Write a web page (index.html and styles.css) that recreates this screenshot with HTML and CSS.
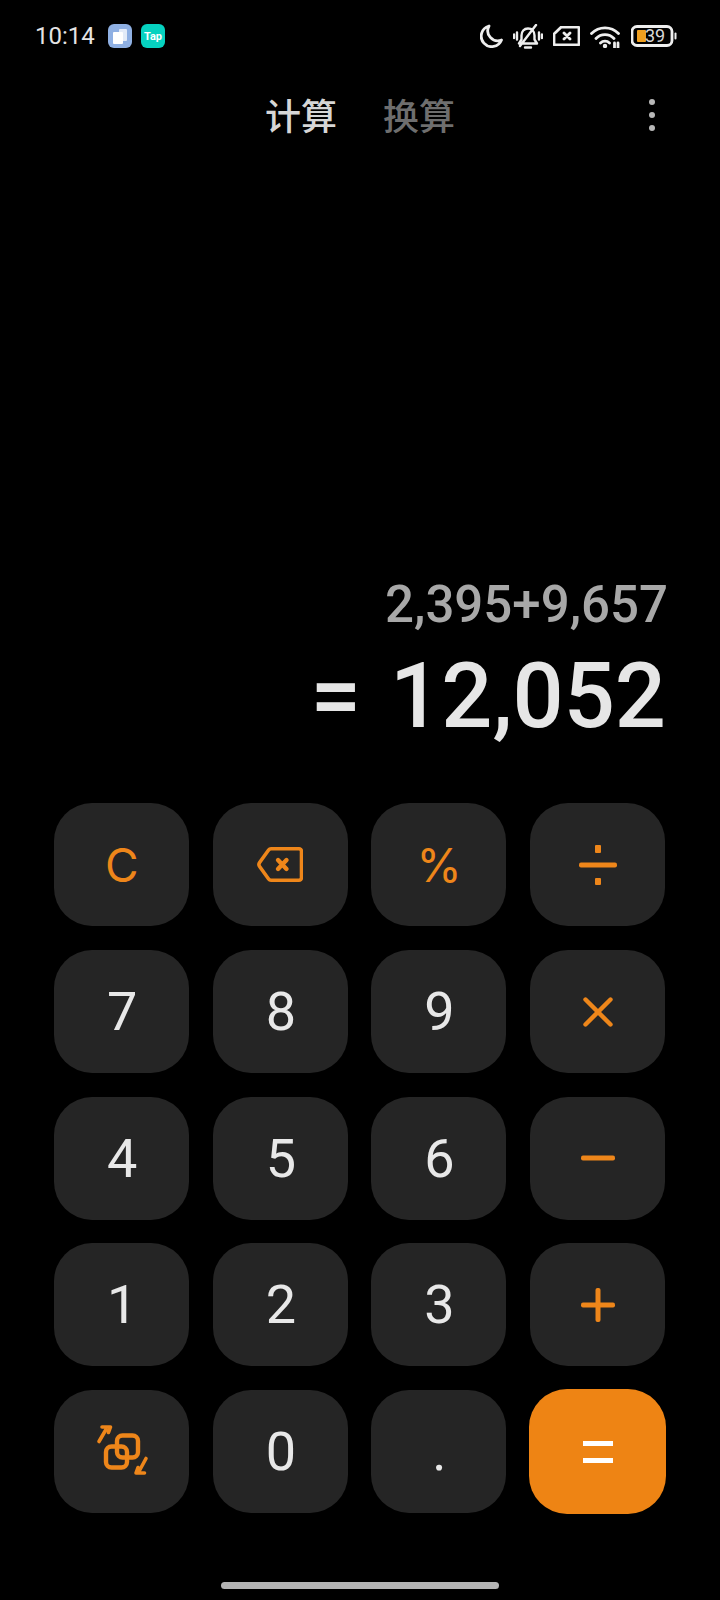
FILE: index.html
```html
<!DOCTYPE html>
<html lang="zh">
<head>
    <meta charset="utf-8">
    <title>计算器</title>
    <link rel="stylesheet" href="styles.css">
</head>
<body>
    <div class="page">
        <div class="status">
            <span class="time">10:14</span>
            <span class="app app-blue">
                <svg width="24" height="24" viewBox="0 0 24 24"><rect x="11" y="5" width="8" height="12" rx="1" fill="#fff" opacity="0.75"/><rect x="5" y="8" width="10" height="12" rx="1" fill="#fff"/></svg>
            </span>
            <span class="app app-tap">Tap</span>
            <div class="status-icons">
                <svg width="23" height="24" viewBox="0 0 23 24"><path d="M9 2 A10.5 10.5 0 1 0 21.5 16 A10 10 0 0 1 9 2 Z" class="line"/></svg>
                <svg width="30" height="25" viewBox="0 0 30 25"><path d="M15 4.5 c-4 0 -6.5 3 -6.5 7 v4 l-2.5 4 h18 l-2.5 -4 v-4 c0 -4 -2.5 -7 -6.5 -7 Z M12 23.5 h6 M7 22 L23 1 M4 8.5 v7 M1 10.5 v3.5 M26 8.5 v7 M29 10.5 v3.5" class="line thin"/></svg>
                <svg width="27" height="20" viewBox="0 0 27 20"><path d="M8 1.2 H25 a1 1 0 0 1 1 1 V18 a1 1 0 0 1 -1 1 H2 a1 1 0 0 1 -1 -1 V8 Z M11 7 L17 13 M17 7 L11 13" class="line"/></svg>
                <svg width="31" height="23" viewBox="0 0 31 23"><path d="M1.5 8.5 A19 19 0 0 1 28.5 8.5 M6 13.5 A12.5 12.5 0 0 1 24 13.5 M10.5 18 A6.5 6.5 0 0 1 19.5 18" class="line"/><circle cx="15" cy="21" r="2.2" fill="#eee"/><path d="M24.5 23 v-5 M28 23 v-5" class="line"/></svg>
                <svg width="46" height="22" viewBox="0 0 46 22">
                    <rect x="1" y="1.5" width="40" height="19" rx="5" class="line"/>
                    <rect x="6" y="5" width="9" height="12" rx="1" fill="#f0a020"/>
                    <text x="14" y="17" class="batt-text">39</text>
                    <rect x="43.5" y="7.5" width="2" height="7" rx="1" fill="#eee"/>
                </svg>
            </div>
        </div>

        <div class="tabs">
            <span></span>
            <div class="tab-group">
                <span class="tab active">计算</span>
                <span class="tab">换算</span>
            </div>
            <div class="menu"><i></i><i></i><i></i></div>
        </div>

        <div class="display">
            <div class="expr">2,395+9,657</div>
            <div class="result"><span class="eq">=</span><span>12,052</span></div>
        </div>

        <div class="keypad">
            <div class="key op txt">C</div>
            <div class="key op">
                <svg width="46" height="35" viewBox="0 0 46 35"><path d="M14 1.8 H42 a2.5 2.5 0 0 1 2.5 2.5 V30.7 a2.5 2.5 0 0 1 -2.5 2.5 H14 a3 3 0 0 1 -2.4 -1.2 L2.6 19.5 a3.5 3.5 0 0 1 0 -4 L11.6 3 a3 3 0 0 1 2.4 -1.2 Z" class="op-line"/><path d="M21 13 L29.5 22 M29.5 13 L21 22" class="op-line heavy"/></svg>
            </div>
            <div class="key op txt">%</div>
            <div class="key op">
                <svg width="38" height="40" viewBox="0 0 38 40"><rect x="16" y="0" width="6" height="8" rx="1" class="op-fill"/><rect x="0" y="17.5" width="38" height="5" rx="2" class="op-fill"/><rect x="16" y="33" width="6" height="7" rx="1" class="op-fill"/></svg>
            </div>

            <div class="key">7</div>
            <div class="key">8</div>
            <div class="key">9</div>
            <div class="key op">
                <svg width="30" height="30" viewBox="0 0 30 30"><path d="M2.5 2.5 L27.5 27.5 M27.5 2.5 L2.5 27.5" class="op-line heavy"/></svg>
            </div>

            <div class="key">4</div>
            <div class="key">5</div>
            <div class="key">6</div>
            <div class="key op">
                <svg width="34" height="6" viewBox="0 0 34 6"><rect y="0.5" width="34" height="5" rx="2" class="op-fill"/></svg>
            </div>

            <div class="key">1</div>
            <div class="key">2</div>
            <div class="key">3</div>
            <div class="key op">
                <svg width="34" height="34" viewBox="0 0 34 34"><rect y="14.5" width="34" height="5" rx="2" class="op-fill"/><rect x="14.5" width="5" height="34" rx="2" class="op-fill"/></svg>
            </div>

            <div class="key op">
                <svg width="80" height="80" viewBox="-3 1.5 80 80">
                    <rect x="32" y="25" width="21" height="22" rx="5.5" class="op-line heavy"/>
                    <rect x="21" y="36" width="21" height="21" rx="5.5" class="op-line heavy"/>
                    <path d="M14 31 L21 19 M17 16.5 H25.5 L23.5 22 M61 48 L54.5 60 M59.5 62.5 H51 L53 57" class="op-line"/>
                </svg>
            </div>
            <div class="key">0</div>
            <div class="key">.</div>
            <div class="key equals">
                <svg width="30" height="22" viewBox="0 0 30 22"><rect width="30" height="5" y="0" fill="#fff"/><rect width="30" height="5" y="17" fill="#fff"/></svg>
            </div>
        </div>

        <div class="home-bar"></div>
    </div>
</body>
</html>
```

FILE: styles.css
```css
body {
    margin: 0;
    background-color: #000;
    font-family: Roboto, "Noto Sans CJK SC", sans-serif;
}

.page {
    height: 1600px;
    display: flex;
    flex-direction: column;
    overflow: hidden;
}

/* status bar */
.status {
    display: flex;
    align-items: center;
    height: 26px;
    margin-top: 23px;
    padding: 0 43px 0 35px;
}

.time {
    width: 60px;
    margin-right: 13px;
    color: #e4e4e4;
    font-size: 24px;
    white-space: nowrap;
}

.app {
    width: 24px;
    height: 24px;
    margin-right: 9px;
    border-radius: 6px;
    display: flex;
    align-items: center;
    justify-content: center;
}

.app-blue {
    background-color: #8fb0e3;
}

.app-tap {
    background-color: #06d2c0;
    color: #fff;
    font-size: 11px;
    font-weight: 700;
}

.status-icons {
    margin-left: auto;
    display: flex;
    align-items: center;
    gap: 10px;
}

.line {
    fill: none;
    stroke: #eee;
    stroke-width: 2.8;
    stroke-linecap: round;
    stroke-linejoin: round;
}

.thin {
    stroke-width: 2.4;
}

.batt-text {
    fill: #d8d8d8;
    font-size: 18px;
}

/* tabs */
.tabs {
    display: grid;
    grid-template-columns: 1fr auto 1fr;
    align-items: center;
    margin-top: 45px;
    height: 48px;
}

.tab-group {
    display: flex;
    gap: 46px;
}

.tab {
    color: #6e6e6e;
    font-size: 36px;
    font-weight: 500;
    line-height: 48px;
}

.tab.active {
    color: #d6d6d6;
}

.menu {
    justify-self: end;
    margin-right: 65px;
    margin-bottom: 6px;
    display: flex;
    flex-direction: column;
    gap: 7px;
}

.menu i {
    width: 6px;
    height: 6px;
    border-radius: 50%;
    background-color: #b8b8b8;
}

/* display */
.display {
    margin-top: auto;
    padding-right: 54px;
    text-align: right;
}

.expr {
    margin-right: -2px;
    color: #a8a8a8;
    font-size: 51px;
    font-weight: 500;
    line-height: 60px;
}

.result {
    display: flex;
    justify-content: flex-end;
    gap: 29px;
    margin-top: 8px;
    margin-bottom: 52px;
    color: #e6e6e6;
    font-size: 90px;
    font-weight: 500;
    line-height: 108px;
}

/* keypad */
.keypad {
    display: grid;
    grid-template-columns: repeat(4, 135px);
    grid-auto-rows: 123px;
    gap: 23.67px 23.6px;
    padding-left: 54.3px;
}

.key {
    display: flex;
    align-items: center;
    justify-content: center;
    padding-left: 1px;
    background-color: #252525;
    border-radius: 38px;
    color: #e8e8e8;
    font-size: 54px;
}

.op {
    padding-left: 0;
    color: #ee861a;
}

.txt {
    font-family: Inter, sans-serif;
    font-size: 46px;
}

.op-line {
    fill: none;
    stroke: #ee861a;
    stroke-width: 3.6;
    stroke-linecap: round;
    stroke-linejoin: round;
}

.heavy {
    stroke-width: 4.4;
}

.op-fill {
    fill: #ee861a;
}

.equals {
    margin: -1px;
    padding-left: 0;
    background-color: #ee8414;
}

.home-bar {
    width: 278px;
    height: 7px;
    margin: 69px auto 11px;
    border-radius: 4px;
    background-color: #b4b4b4;
}
```
